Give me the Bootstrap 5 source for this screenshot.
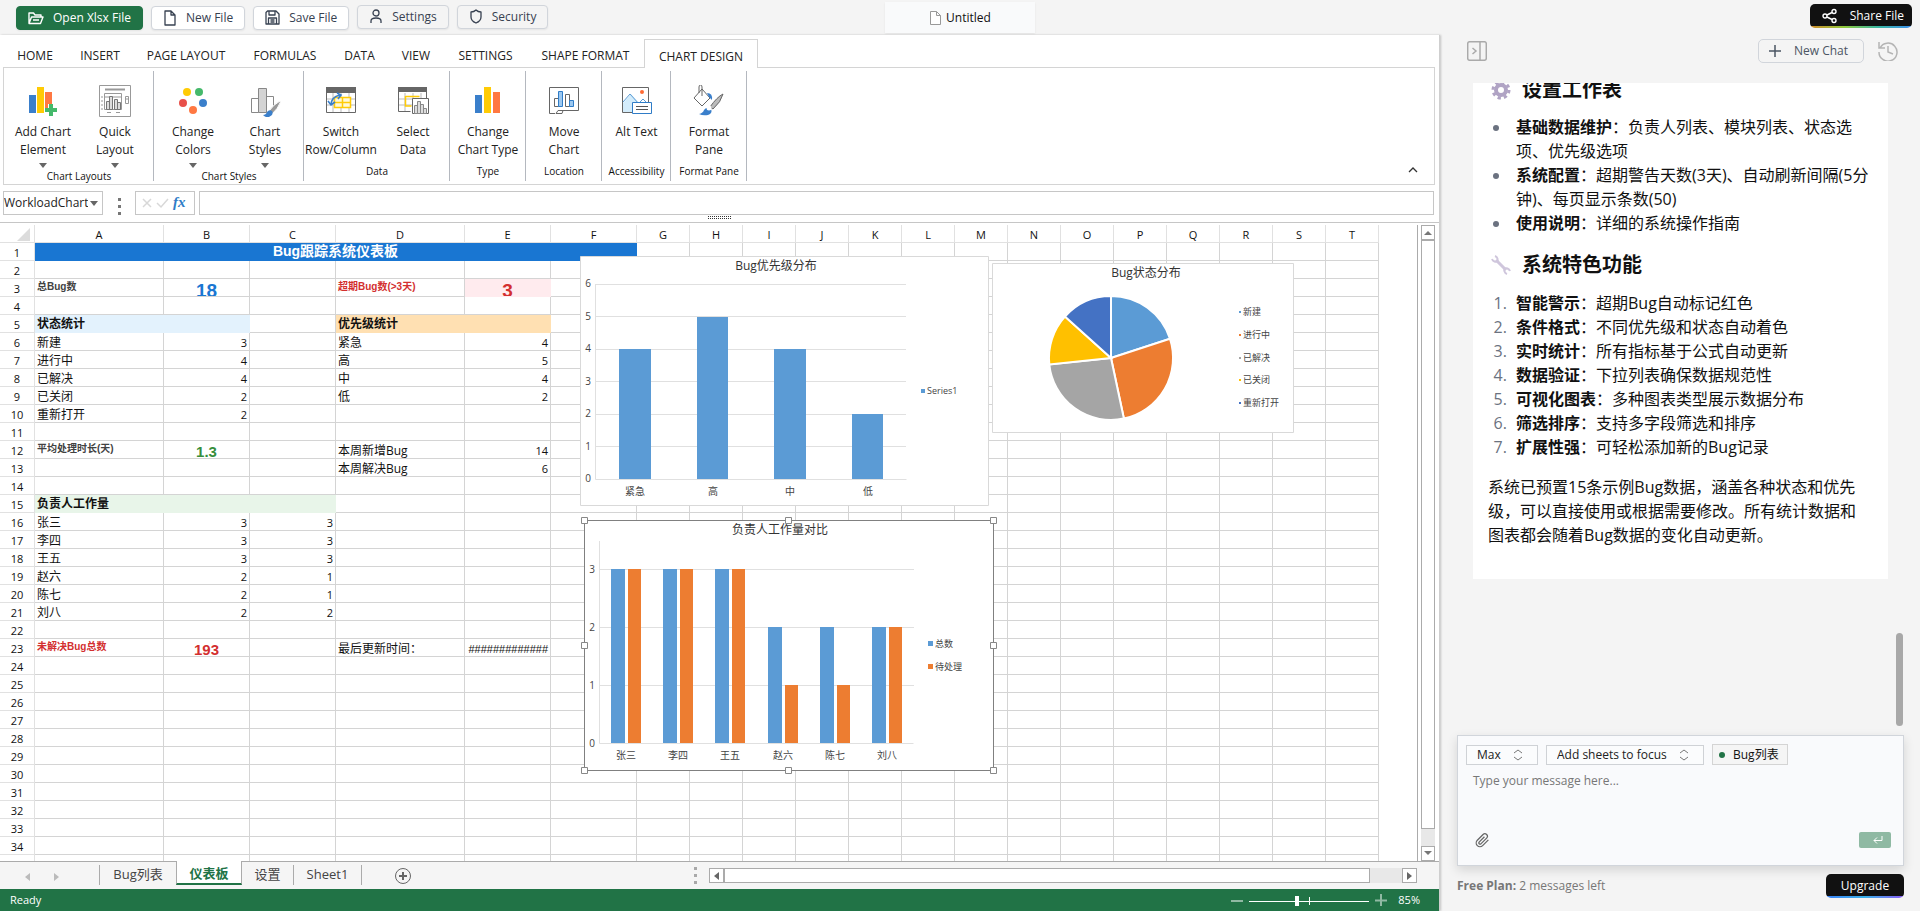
<!DOCTYPE html>
<html lang="zh-CN">
<head>
<meta charset="utf-8">
<meta name="viewport" content="width=device-width, initial-scale=1">
<title>Untitled</title>
<link href="https://cdn.jsdelivr.net/npm/bootstrap@5.3.0/dist/css/bootstrap.min.css" rel="stylesheet">
<style>
:root{--green:#217346;--line:#d4d4d4;--pane:#f4f4f4}
body{font-family:"Open Sans","Noto Sans CJK SC",sans-serif;font-size:12px;line-height:18px;color:#111;background:var(--pane)}
button,input,select,textarea{font-family:inherit}
svg{display:block;flex:none}
/* top bar */
.topbar{height:35px;display:grid;grid-template-columns:1fr auto 1fr;padding:0 8px}
.tool{height:24px;padding:0 11px;display:inline-flex;align-items:center;gap:9px;font-size:12px;line-height:18px;border:1px solid #d1d5db;border-radius:4px;background:#fff;color:#374151;box-shadow:0 1px 2px #0001}
.tool.open{background:var(--green);border-color:var(--green);color:#fff}
.tool.soft{background:var(--pane);margin-bottom:2px}
.docname{width:150px;height:31px;margin-top:2px;background:#f9fafb;box-shadow:0 1px 2px #0001}
.glow{height:24px;border:0;border-radius:5px;color:#fff;font-size:12px;line-height:18px;background:linear-gradient(#111,#111) top/100% calc(100% - 2px) no-repeat,linear-gradient(90deg,#d08a2a,#8fc83a,#38b6a0,#3b8ff0)}
.glow.cool{background:linear-gradient(#111,#111) top/100% calc(100% - 2px) no-repeat,linear-gradient(90deg,#3b82f6,#38b0e8,#8b5cf6)}
/* workbook */
.book{background:#fff;border-right:1px solid #cfcfcf;box-shadow:1px 0 2px #0003;min-width:0}
.tabs{height:33px;padding-left:3px}
.tabs a{color:#222;text-decoration:none;padding:12px 0 0;text-align:center;height:32px;line-height:18px}
.tabs a.on{margin-top:4px;height:29px;padding-top:8px;border:1px solid var(--line);border-bottom:0;background:#fff;z-index:1}
.ribbon{margin:-1px 4px 0 3px;border:1px solid var(--line);height:118px;padding:3px 0;position:relative}
.grp{border-right:1px solid #b4b8bf;height:110px;padding-left:1px}
.grp small{font-size:10px;line-height:12px;margin-top:6px;white-space:nowrap}
.grp.drop small{margin-top:0}
.rb{border:0;background:none;padding:14px 0 0;width:72px;display:flex;flex-direction:column;align-items:center;font-size:12px;line-height:18px;color:#222}
.rb span{margin-top:6px;min-height:36px;white-space:nowrap}
.rb i{height:11px;padding-top:4px}
.rb i::before,.caret::before{content:"";display:block;border:4px solid transparent;border-top:5px solid #666;border-bottom:0}
.fbar{padding:6px 5px 0 3px;height:38px;border-bottom:1px solid #c6c6c6;position:relative}
.box{height:24px;border:1px solid #c6c6c6;background:#fff;font-size:12px}
.box input{border:0;padding:0;outline:0;width:84px;color:#222}
.grip{position:absolute;bottom:2px;left:50%;margin-left:-12px;width:24px;height:4px;background:repeating-linear-gradient(90deg,#333 0 1px,transparent 1px 2px) 0 0/100% 1px no-repeat,repeating-linear-gradient(90deg,#333 0 1px,transparent 1px 2px) 0 2px/100% 1px no-repeat}
.dots span{width:3px;height:3px;background:#777;display:block}
/* grid */
.sheet{position:relative;overflow:hidden;border-right:1px solid #ababab;margin-top:2px}
.grid{table-layout:fixed;border-collapse:separate;border-spacing:0;width:1379px;font-size:12px}
.grid th,.grid td{padding:0;height:18px;border-right:1px solid var(--line);border-bottom:1px solid var(--line)}
.grid th{font-weight:400;font-size:11px;text-align:center;border-color:#e1e1e1;line-height:15px;padding-top:2px}
.grid div{height:17px;line-height:19px;overflow:hidden;padding:0 2px;white-space:nowrap}
.grid .n{text-align:right;font-size:11px;line-height:20px}
.grid .hash{font-family:"Liberation Sans",sans-serif}
.grid .b{font-weight:700;line-height:18px}
.grid .s{font:700 10px/16px "Liberation Sans","Noto Sans CJK SC",sans-serif;color:#424242}
.grid .big{font:700 19px/24px "Liberation Sans",sans-serif;text-align:center;color:#1976d2}
.grid .mid{font:700 15px/21px "Liberation Sans",sans-serif;text-align:center}
.grid .red{color:#d32f2f}.grid .grn{color:#388e3c}
.grid .ttl{font:700 14px/16px "Liberation Sans","Noto Sans CJK SC",sans-serif;text-align:center;color:#fff}
.grid td.blue{background:#1976d2;border-color:#1976d2}
.grid td.pink{background:#ffebee;border-color:#ffebee}
.grid td.sky{background:#e3f2fd;border-color:#e3f2fd}
.grid td.sand{background:#ffe0b2;border-color:#ffe0b2}
.grid td.mint{background:#e8f5e9;border-color:#e8f5e9}
.chart{position:absolute;font-family:"Open Sans","Noto Sans CJK SC",sans-serif;overflow:visible}
.chart text{fill:#444;font-size:10px}
.chart .t{font-size:12px;text-anchor:middle;fill:#333}
.chart .c{text-anchor:middle}.chart .e{text-anchor:end}.chart .l{font-size:9px}
.c1{left:580px;top:31px}.c2{left:992px;top:38px}.c3{left:584px;top:295px}
.sb{border:1px solid #ababab;background:#fff;width:15px;height:15px;padding:0;display:flex;align-items:center;justify-content:center;flex:none}
.vs{width:14px;margin:2px 4px 0 3px;background:#e8e8e8}
.thumb{background:#fff;border:1px solid #ababab}
.sheets{height:28px;background:#f5f5f5;border-top:1px solid #ababab}
.sheets a{color:#444;text-decoration:none;font-size:13px;line-height:18px;height:20px;margin-top:3px;text-align:center;border-right:1px solid #ababab}
.sheets a.on{height:24px;margin:-1px 0 0;line-height:24px;padding-top:0;background:#fff;color:var(--green);font-weight:700;border:solid #ababab;border-width:0 1px}
.sheets a.on{border-bottom:2px solid var(--green)}
.status{height:22px;background:var(--green);color:#fff;font-size:11px}
.zoomer{appearance:none;width:120px;height:10px;margin:0;background:linear-gradient(#fff,#fff) 60px 1px/1px 8px no-repeat,linear-gradient(#fff,#fff) 0 5px/100% 1px no-repeat}
.zoomer::-webkit-slider-thumb{appearance:none;width:4px;height:10px;background:#fff}
/* chat */
.chat{width:25%;flex:none;padding:0 16px 0 17px}
.chathead{height:48px;padding:4px 6px 0 10px}
.newchat{height:24px;border:1px solid #d1d5db;border-radius:5px;background:var(--pane);color:#4b5563;padding:0 15px 0 10px;font-size:12px;line-height:18px;gap:13px}
.log{min-height:0;overflow:hidden;position:relative}
.msg{margin:0 16px;background:#fff;padding:0 15px 32px;font-size:16px;line-height:24px;color:#111;overflow:hidden}
.msg h3{font-size:20px;line-height:28px;font-weight:700;margin:21px 0 12px;padding-left:3px;gap:11px}
.msg h3.first{margin-top:-7px;margin-bottom:11px}
.msg h3.second{margin:16px 0 12px}
.msg ul,.msg ol{padding-left:23px;margin:0}
.msg li{padding-left:5px}
.msg ul ::marker,.msg ol ::marker{color:#6b7280}
.msg p{margin:16px 0 0;padding-right:8px}
.scroller{position:absolute;right:1px;bottom:9px;width:7px;height:93px;border-radius:4px;background:#a8a8a8}
.compose{background:#f9fafc;border:1px solid #d1d5db;height:131px;padding:8px;box-shadow:0 4px 10px #0002}
.pick{appearance:none;border:1px solid #cfd2d6;height:20px;padding:0 10px;font-size:12px;line-height:18px;background:#fbfcfd url("data:image/svg+xml,%3Csvg xmlns='http://www.w3.org/2000/svg' width='10' height='12' fill='none' stroke='%23777'%3E%3Cpath d='M1 4l4-3 4 3M1 8l4 3 4-3'/%3E%3C/svg%3E") no-repeat right 14px center;color:#222}
.tag{border:1px solid #d4d4d4;background:#f5f5f5;height:21px;padding:0 8px 0 6px;gap:8px}
.compose textarea{border:0;background:none;resize:none;outline:0;height:67px;padding:7px 7px;font-size:12px;line-height:18px}
.compose textarea::placeholder{color:#777;opacity:1}
.send{width:32px;height:16px;border:0;border-radius:2px;background:#8fb9a3;padding:0 0 0 14px}
.plan{height:45px;padding-top:8px;color:#777}
</style>
</head>
<body class="vh-100 d-flex flex-column overflow-hidden">
<header class="topbar flex-shrink-0">
  <div class="d-flex align-items-center gap-2 ps-2">
    <button class="tool open"><svg width="16" height="14" viewBox="0 0 16 14" fill="none" stroke="#fff" stroke-width="1.4" stroke-linejoin="round"><path d="M1 12V2h4.500l1.500 2h6v2M1 12.500L3.500 6h11.500l-2.500 6.500zM5 9h6"/></svg>Open Xlsx File</button>
    <button class="tool"><svg width="14" height="16" viewBox="0 0 14 16" fill="none" stroke="#374151" stroke-width="1.3" stroke-linejoin="round"><path d="M2 1h6l4 4v10H2zM8 1v4h4"/></svg>New File</button>
    <button class="tool"><svg width="15" height="15" viewBox="0 0 15 15" fill="none" stroke="#374151" stroke-width="1.3" stroke-linejoin="round"><path d="M1 2.500L2.500 1H11l3 3v10H1zM4 1v4h6V1M3.500 14V8h8v6M5.500 10h4M5.500 12h4"/></svg>Save File</button>
    <button class="tool soft"><svg width="14" height="15" viewBox="0 0 14 15" fill="none" stroke="#374151" stroke-width="1.3"><circle cx="7" cy="4" r="3"/><path d="M2 14V12q0-3 5-3t5 3v2"/></svg>Settings</button>
    <button class="tool soft"><svg width="14" height="15" viewBox="0 0 14 15" fill="none" stroke="#374151" stroke-width="1.3" stroke-linejoin="round"><path d="M7 1q2 2 5 2v5q0 4-5 6-5-2-5-6V3q3 0 5-2z"/></svg>Security</button>
  </div>
  <div class="docname d-flex align-items-center justify-content-center gap-1"><svg width="13" height="14" viewBox="0 0 13 14" fill="#fff" stroke="#999"><path d="M1.500.5h6l4 4v9h-10zM7.500.5v4h4"/></svg>Untitled</div>
  <div class="d-flex justify-content-end pt-1"><button class="glow d-flex align-items-center gap-2 px-2"><svg class="ms-1 me-1" width="16" height="16" viewBox="0 0 16 16" fill="none" stroke="#fff" stroke-width="1.4"><circle cx="3" cy="8" r="2"/><circle cx="12" cy="3.500" r="2"/><circle cx="12" cy="12.500" r="2"/><path d="M5 7l5-2.500M5 9l5 2.500"/></svg>Share File</button></div>
</header>
<div class="d-flex flex-grow-1" style="min-height:0">
<main class="book d-flex flex-column flex-grow-1">
  <nav class="tabs d-flex flex-shrink-0">
    <a href="#" style="width:64px">HOME</a><a href="#" style="width:66px">INSERT</a><a href="#" style="width:106px">PAGE LAYOUT</a><a href="#" style="width:92px">FORMULAS</a><a href="#" style="width:57px">DATA</a><a href="#" style="width:56px">VIEW</a><a href="#" style="width:83px">SETTINGS</a><a href="#" style="width:117px">SHAPE FORMAT</a><a href="#" class="on" style="width:114px">CHART DESIGN</a>
  </nav>
  <section class="ribbon d-flex flex-shrink-0">
    <div class="grp drop d-flex flex-column align-items-center" style="width:150px"><div class="d-flex">
      <button class="rb"><svg width="32" height="32" viewBox="0 0 32 32"><path fill="#3a7fcb" d="M2 10h7v18H2z"/><path fill="#ffcb05" d="M10 2h7v26h-7z"/><path fill="#ff7842" d="M18 7h7v12h-4v5h-3z"/><path fill="#45b96b" d="M22 19h4v4h4v4h-4v4h-4v-4h-4v-4h4z"/></svg><span>Add Chart<br>Element</span><i></i></button>
      <button class="rb"><svg width="32" height="32" viewBox="0 0 32 32" fill="none" stroke="#999"><path d="M.5.5h31v31H.5z"/><path d="M6 4.500h20" stroke-width="2"/><path d="M5.500 8.500h17v16h-17zM2 12h2M2 16h2M2 20h2M2 24h2M6 12h16M26.500 11.500h3v7h-3zM27 14h2M8 27.500h4M17 27.500h4"/><path fill="#ddd" stroke="#777" d="M7.500 16.500h3v8h-3zM10.500 11.500h3v13h-3zM15.500 14.500h3v10h-3zM18.500 17.500h3v7h-3z"/></svg><span>Quick<br>Layout</span><i></i></button></div>
      <small>Chart Layouts</small></div>
    <div class="grp drop d-flex flex-column align-items-center" style="width:150px"><div class="d-flex">
      <button class="rb"><svg width="32" height="32" viewBox="0 0 32 32"><circle cx="10" cy="7" r="4" fill="#ffcb05"/><circle cx="22" cy="7" r="4" fill="#45b96b"/><circle cx="6" cy="18" r="4" fill="#e8504a"/><circle cx="26" cy="18" r="4" fill="#3a7fcb"/><circle cx="16" cy="25" r="4" fill="#ff7842"/></svg><span>Change<br>Colors</span><i></i></button>
      <button class="rb"><svg width="32" height="32" viewBox="0 0 32 32"><g fill="#fff" stroke="#888"><path d="M2.500 13.500h7v14h-7zM17.500 11.500h7v16h-7z"/><path fill="#d4d4d4" d="M9.500 3.500h8v24h-8z"/></g><path d="M31 16q-6 3-11 10l3 3q6-5 9-13z" fill="#999" stroke="#fff"/><path d="M14 30q3 0 4-3 2-3 5-1 2 4-3 6-3 1-6-2z" fill="#3a7fcb"/></svg><span>Chart<br>Styles</span><i></i></button></div>
      <small>Chart Styles</small></div>
    <div class="grp d-flex flex-column align-items-center" style="width:146px"><div class="d-flex">
      <button class="rb"><svg width="32" height="32" viewBox="0 0 32 32" fill="none"><path stroke="#bbb" d="M8 8v19M16 8v19M24 8v19M2 14h28M2 20h28"/><path stroke="#666" d="M1.500 3v24.500h29V3"/><path fill="#666" d="M1 2h30v6H1z"/><path d="M9.500 12.500h16v10h-16zM9 17.500h16M17.500 12v10" stroke="#ffcb05" fill="#fff8d8" stroke-width="1.500"/><path d="M6 20Q6 12 15 10M12 8l4 2-3 4M3 16l3 4 4-3" stroke="#3a7fcb" stroke-width="1.600"/></svg><span>Switch<br>Row/Column</span></button>
      <button class="rb"><svg width="32" height="32" viewBox="0 0 32 32" fill="none"><path stroke="#bbb" d="M8 8v19M16 8v19M24 8v19M2 14h28M2 20h28"/><path stroke="#666" d="M1.500 3v23.500h12M29.500 3v10"/><path fill="#666" d="M1 2h29v5H1z"/><path d="M8.500 11.500h14M8.500 11v10h6" stroke="#ffcb05" stroke-width="1.500"/><path fill="#fff" stroke="#666" d="M15.500 13.500h16v15h-16z"/><path fill="#ddd" stroke="#888" d="M17.500 20.500h3v8h-3zM20.500 16.500h3v12h-3zM23.500 19.500h3v9h-3zM26.500 23.500h3v5h-3z"/></svg><span>Select<br>Data</span></button></div>
      <small>Data</small></div>
    <div class="grp d-flex flex-column align-items-center" style="width:76px">
      <button class="rb"><svg width="32" height="32" viewBox="0 0 32 32"><path fill="#3a7fcb" d="M3 10h7v18H3z"/><path fill="#ffcb05" d="M12 2h7v26h-7z"/><path fill="#ff7842" d="M21 7h7v21h-7z"/></svg><span>Change<br>Chart Type</span></button><small>Type</small></div>
    <div class="grp d-flex flex-column align-items-center" style="width:76px">
      <button class="rb"><svg width="32" height="32" viewBox="0 0 32 32" fill="#fff" stroke="#666"><path d="M7 28.500H1.500v-26h29v23H14"/><path d="M8 28.500l2-3h5l-1 3z"/><path d="M6.500 13.500h4v8h-4zM17.500 9.500h4v12h-4z"/><path fill="#9cc8f0" stroke="#2f7cc7" d="M10.500 6.500h4v15h-4zM21.500 15.500h4v6h-4z"/></svg><span>Move<br>Chart</span></button><small>Location</small></div>
    <div class="grp d-flex flex-column align-items-center" style="width:69px">
      <button class="rb" style="width:67px"><svg width="32" height="32" viewBox="0 0 32 32" fill="#fff"><path stroke="#666" d="M1.500 2.500h26v25h-26z"/><path d="M2 18l8-9 10 11v7H2z" fill="#d3ecfb"/><path d="M2 17l7-8 9 10M18 18l4-4 4 4" fill="none" stroke="#5a9bd4"/><circle cx="21" cy="7" r="2" fill="#ff6b35"/><path stroke="#2f7cc7" d="M11.500 17.500h19v11h-19z"/><path stroke="#555" d="M15 21.500h12M15 24.500h12"/></svg><span>Alt Text</span></button><small>Accessibility</small></div>
    <div class="grp d-flex flex-column align-items-center" style="width:76px">
      <button class="rb"><svg width="32" height="32" viewBox="0 0 32 32" fill="none" stroke="#666"><path d="M9 4l8 9-8 8-8-8zM9 11V2q0-2-1.500-2T6 2v6"/><path fill="#3a7fcb" stroke="none" d="M14 8q6 0 5 7l-3-3z"/><path fill="#bbb" d="M30 9q-6 3-13 13l3 2q8-7 10-15z"/><path fill="#3a7fcb" stroke="none" d="M6 29q4-1 5-4 3-4 7-1 2 4-3 6-5 1-9-1z"/><circle cx="16" cy="23" r="2.500" fill="#fff" stroke="none"/></svg><span>Format<br>Pane</span></button><small>Format Pane</small></div>
    <button class="btn btn-sm p-0 border-0 ms-auto mt-auto me-3 mb-2" aria-label="Collapse"><svg width="10" height="7" viewBox="0 0 10 7" fill="none" stroke="#333" stroke-width="1.300"><path d="M1 6l4-4 4 4"/></svg></button>
  </section>
  <section class="fbar d-flex flex-shrink-0">
    <div class="box d-flex align-items-center justify-content-between" style="width:100px"><input value="WorkloadChart" aria-label="Name box"><b class="caret me-1"></b></div>
    <div class="dots d-flex flex-column justify-content-center gap-1" style="margin:0 14px 0 15px"><span></span><span></span><span></span></div>
    <div class="box d-flex align-items-center justify-content-center" style="width:60px"><svg width="56" height="20" viewBox="0 0 56 20"><path d="M6 6l8 8M14 6l-8 8M20 10l4 4 7-8" stroke="#d8d8d8" stroke-width="1.500" fill="none"/><text x="36" y="14" font-family="Liberation Serif" font-style="italic" font-weight="700" font-size="15" fill="#2f7cc7">fx</text></svg></div>
    <input class="box flex-grow-1 ms-1" aria-label="Formula">
    <div class="grip"></div>
  </section>
  <div class="d-flex flex-grow-1" style="min-height:0">
    <div class="sheet flex-grow-1">
      <table class="grid" id="grid"></table>
      <svg class="chart c1" width="409" height="250"><path d="M.5.5h408v249H.500z" fill="#fff" stroke="#d9d9d9"/>
        <path d="M15 28.500h311M15 60.500h311M15 93.500h311M15 125.500h311M15 158.500h311M15 190.500h311M15.500 28v195.500h311" fill="none" stroke="#e0e0e0"/>
        <path fill="#5b9bd5" d="M39 93h32v130H39zM117 61h31v162h-31zM194 93h32v130h-32zM272 158h31v65h-31zM341 133h4v4h-4z"/>
        <text class="t" x="196" y="14">Bug优先级分布</text>
        <text class="e" x="11" y="31">6</text><text class="e" x="11" y="64">5</text><text class="e" x="11" y="96">4</text><text class="e" x="11" y="129">3</text><text class="e" x="11" y="161">2</text><text class="e" x="11" y="194">1</text><text class="e" x="11" y="226">0</text>
        <text class="c" x="55" y="239">紧急</text><text class="c" x="133" y="239">高</text><text class="c" x="210" y="239">中</text><text class="c" x="288" y="239">低</text><text class="l" x="347" y="138">Series1</text></svg>
      <svg class="chart c2" width="302" height="170"><path d="M.5.5h301v169H.500z" fill="#fff" stroke="#d9d9d9"/>
        <g stroke="#fff" stroke-width="2"><path fill="#5b9bd5" d="M119 95V33A62 62 0 0 1 178 75.800z"/><path fill="#ed7d31" d="M119 95L178 75.800A62 62 0 0 1 131.900 155.600z"/><path fill="#a5a5a5" d="M119 95L131.900 155.600A62 62 0 0 1 57.300 101.500z"/><path fill="#ffc000" d="M119 95L57.300 101.500A62 62 0 0 1 72.900 53.500z"/><path fill="#4472c4" d="M119 95L72.900 53.500A62 62 0 0 1 119 33z"/></g>
        <path fill="#5b9bd5" d="M247 48h2v2h-2z"/><path fill="#ed7d31" d="M247 71h2v2h-2z"/><path fill="#a5a5a5" d="M247 94h2v2h-2z"/><path fill="#ffc000" d="M247 116h2v2h-2z"/><path fill="#4472c4" d="M247 139h2v2h-2z"/>
        <text class="t" x="154" y="14">Bug状态分布</text><text class="l" x="251" y="52">新建</text><text class="l" x="251" y="75">进行中</text><text class="l" x="251" y="98">已解决</text><text class="l" x="251" y="120">已关闭</text><text class="l" x="251" y="143">重新打开</text></svg>
      <svg class="chart c3" width="410" height="251"><path d="M.5.5h409v250H.500z" fill="#fff" stroke="#808080"/>
        <path d="M16 49.500h314M16 107.500h314M16 165.500h314M15.500 21v202.500h314" fill="none" stroke="#e0e0e0"/>
        <g id="bars"></g>
        <path fill="#5b9bd5" d="M344 121h5v5h-5z"/><path fill="#ed7d31" d="M344 144h5v5h-5z"/>
        <text class="t" x="196" y="14">负责人工作量对比</text>
        <text class="e" x="11" y="53">3</text><text class="e" x="11" y="111">2</text><text class="e" x="11" y="169">1</text><text class="e" x="11" y="227">0</text>
        <text class="l" x="351" y="127">总数</text><text class="l" x="351" y="150">待处理</text>
        <path fill="#fff" stroke="#888" d="M-2.500-2.500h6v6h-6zM201.500-2.500h6v6h-6zM406.500-2.500h6v6h-6zM-2.500 122.500h6v6h-6zM406.500 122.500h6v6h-6zM-2.500 247.500h6v6h-6zM201.500 247.500h6v6h-6zM406.500 247.500h6v6h-6z"/></svg>
    </div>
    <div class="vs d-flex flex-column"><button class="sb w-100" aria-label="Up"><svg width="8" height="5"><path d="M0 5l4-4 4 4z" fill="#777"/></svg></button><div class="thumb flex-grow-1" style="margin-bottom:17px"></div><button class="sb w-100" aria-label="Down"><svg width="8" height="5"><path d="M0 0l4 4 4-4z" fill="#777"/></svg></button></div>
  </div>
  <nav class="sheets d-flex flex-shrink-0">
    <div class="d-flex align-items-center border-end" style="width:100px;height:20px;margin-top:3px;padding:4px 0 0 25px;gap:24px;border-color:#ababab!important"><svg width="5" height="8"><path d="M5 0v8L0 4z" fill="#bbb"/></svg><svg width="5" height="8"><path d="M0 0v8l5-4z" fill="#bbb"/></svg></div>
    <a href="#" style="width:76px;border:0">Bug列表</a><a href="#" class="on" style="width:66px">仪表板</a><a href="#" style="width:52px">设置</a><a href="#" style="width:68px">Sheet1</a>
    <button class="btn p-0 border-0 ms-4" style="padding-left:9px!important" aria-label="Add sheet"><svg width="16" height="16" fill="none" stroke="#666"><circle cx="8" cy="8" r="7.500"/><path d="M4 8h8M8 4v8" stroke-width="2"/></svg></button>
    <div class="dots d-flex flex-column justify-content-center gap-1 ms-auto" style="margin-right:12px;opacity:.6"><span></span><span></span><span></span></div>
    <div class="d-flex align-items-center" style="width:708px;margin-right:22px"><button class="sb" aria-label="Left"><svg width="5" height="8"><path d="M5 0v8L0 4z" fill="#666"/></svg></button><div class="thumb flex-grow-1" style="height:15px"></div><div style="width:32px;height:15px;background:#e8e8e8"></div><button class="sb" aria-label="Right"><svg width="5" height="8"><path d="M0 0v8l5-4z" fill="#666"/></svg></button></div>
  </nav>
  <footer class="status d-flex align-items-center flex-shrink-0" style="padding:0 19px 0 10px">Ready
    <svg class="ms-auto" width="12" height="12"><path d="M0 7h12" stroke="#90b9a3" stroke-width="2"/></svg><input class="zoomer" type="range" min="10" max="210" value="88" aria-label="Zoom" style="margin:2px 6px 0"><svg width="12" height="12"><path d="M0 6.500h12M6 0v12" stroke="#90b9a3" stroke-width="2"/></svg><span style="margin-left:11px">85%</span></footer>
</main>
<aside class="chat d-flex flex-column">
  <div class="chathead d-flex">
    <button class="btn p-0 border-0 align-self-start me-auto" aria-label="Hide panel" style="margin-top:2px"><svg width="20" height="20" fill="none" stroke="#aaa" stroke-width="1.500"><rect x=".7" y=".7" width="18.600" height="18.600" rx="2"/><path d="M13 1v18M5.500 7l3.500 3-3.500 3"/></svg></button>
    <button class="newchat d-flex align-items-center"><svg width="12" height="12" stroke="#4b5563" stroke-width="1.500"><path d="M0 6h12M6 0v12"/></svg>New Chat</button>
    <button class="btn p-0 border-0 align-self-start" aria-label="History" style="margin:2px 0 0 14px"><svg width="20" height="20" fill="none" stroke="#b4b4b4" stroke-width="1.500"><path d="M2 7a9 9 0 1 1-1 4M1 1v6h6M10 5v6l5 2"/></svg></button>
  </div>
  <div class="log flex-grow-1">
    <div class="msg">
      <h3 class="first d-flex align-items-center"><svg width="20" height="20" viewBox="0 0 20 20" fill="none" stroke="#b0a3c4"><circle cx="10" cy="10" r="5" stroke-width="4"/><circle cx="10" cy="10" r="8" stroke-width="3" stroke-dasharray="3.300 3"/></svg>设置工作表</h3>
      <ul><li><b>基础数据维护</b>：负责人列表、模块列表、状态选项、优先级选项</li><li><b>系统配置</b>：超期警告天数(3天)、自动刷新间隔(5分钟)、每页显示条数(50)</li><li><b>使用说明</b>：详细的系统操作指南</li></ul>
      <h3 class="second d-flex align-items-center"><svg width="20" height="20" viewBox="0 0 20 20" fill="none" stroke="#cfc6dc" stroke-width="3"><path d="M5 5l10 10"/><path d="M1 4a4 4 0 0 0 6 2M4 1a4 4 0 0 1 2 6M19 16a4 4 0 0 0-6-2M16 19a4 4 0 0 1-2-6" stroke-width="2"/></svg>系统特色功能</h3>
      <ol><li><b>智能警示</b>：超期Bug自动标记红色</li><li><b>条件格式</b>：不同优先级和状态自动着色</li><li><b>实时统计</b>：所有指标基于公式自动更新</li><li><b>数据验证</b>：下拉列表确保数据规范性</li><li><b>可视化图表</b>：多种图表类型展示数据分布</li><li><b>筛选排序</b>：支持多字段筛选和排序</li><li><b>扩展性强</b>：可轻松添加新的Bug记录</li></ol>
      <p>系统已预置15条示例Bug数据，涵盖各种状态和优先级，可以直接使用或根据需要修改。所有统计数据和图表都会随着Bug数据的变化自动更新。</p>
    </div>
    <div class="scroller"></div>
  </div>
  <form class="compose d-flex flex-column flex-shrink-0">
    <div class="d-flex align-items-end gap-2"><select class="pick" style="width:72px" aria-label="Model"><option>Max</option></select><select class="pick" style="width:158px" aria-label="Sheets"><option>Add sheets to focus</option></select><span class="tag d-flex align-items-center"><svg width="6" height="6"><circle cx="3" cy="3" r="3" fill="#217346"/></svg>Bug列表</span></div>
    <textarea placeholder="Type your message here..." aria-label="Message"></textarea>
    <div class="d-flex align-items-center justify-content-between" style="padding:0 4px 0 9px"><button type="button" class="btn p-0 border-0" aria-label="Attach"><svg width="15" height="15" viewBox="0 0 24 24" fill="none" stroke="#666" stroke-width="2"><path d="M21.400 11l-9.200 9.200a6 6 0 0 1-8.500-8.500l9.200-9.200a4 4 0 0 1 5.700 5.700l-9.200 9.200a2 2 0 0 1-2.800-2.800l8.500-8.500"/></svg></button><button type="button" class="send" aria-label="Send"><svg width="10" height="8" fill="none" stroke="#fff"><path d="M9 0v4.500H1M4 1.500L1 4.500l3 3"/></svg></button></div>
  </form>
  <div class="plan d-flex flex-shrink-0 align-items-start"><span style="padding-top:3px"><b>Free Plan:</b> 2 messages left</span><button class="glow cool ms-auto px-3" style="width:78px;padding:0!important">Upgrade</button></div>
</aside>
</div>
<script src="https://cdn.jsdelivr.net/npm/bootstrap@5.3.0/dist/js/bootstrap.bundle.min.js"></script>
<script>
const cols='ABCDEFGHIJKLMNOPQRST'.split('');
const widths=[129,86,86,129,86,86];
// address: [text, text classes, fill]
const cells={A3:['总Bug数','s'],B3:['18','big'],D3:['超期Bug数(>3天)','s red'],E3:['3','big red','pink'],
A5:['状态统计','b','sky'],B5:['','','sky'],D5:['优先级统计','b','sand'],E5:['','','sand'],
A12:['平均处理时长(天)','s'],B12:['1.3','mid grn'],D12:['本周新增Bug',''],E12:['14','n'],D13:['本周解决Bug',''],E13:['6','n'],
A15:['负责人工作量','b','mint'],B15:['','','mint'],C15:['','','mint'],
A23:['未解决Bug总数','s red'],B23:['193','mid red'],D23:['最后更新时间：',''],E23:['#############','n hash']};
[['新建',3],['进行中',4],['已解决',4],['已关闭',2],['重新打开',2]].forEach(([t,v],i)=>{cells['A'+(6+i)]=[t,''];cells['B'+(6+i)]=[v,'n']});
[['紧急',4],['高',5],['中',4],['低',2]].forEach(([t,v],i)=>{cells['D'+(6+i)]=[t,''];cells['E'+(6+i)]=[v,'n']});
const people=[['张三',3,3],['李四',3,3],['王五',3,3],['赵六',2,1],['陈七',2,1],['刘八',2,2]];
people.forEach(([t,a,b],i)=>{cells['A'+(16+i)]=[t,''];cells['B'+(16+i)]=[a,'n'];cells['C'+(16+i)]=[b,'n']});
let h='<colgroup><col style="width:35px">'+cols.map((c,i)=>`<col style="width:${widths[i]||53}px">`).join('')+'</colgroup><thead><tr><th><svg class="ms-auto me-1" width="13" height="13"><path d="M13 0v13H0z" fill="#dcdcdc"/></svg></th>'+cols.map(c=>`<th>${c}</th>`).join('')+'</tr></thead><tbody>';
for(let r=1;r<=35;r++){h+=`<tr><th>${r<35?r:''}</th>`;
  cols.forEach((c,i)=>{if(r===1&&i<6){if(i===0)h+='<td class="blue" colspan="6"><div class="ttl">Bug跟踪系统仪表板</div></td>';return}
    const d=cells[c+r];h+=d?`<td class="${d[2]||''}"><div class="${d[1]}">${d[0]}</div></td>`:'<td></td>'});
  h+='</tr>'}
document.getElementById('grid').innerHTML=h+'</tbody>';
document.getElementById('bars').innerHTML=people.map(([t,a,b],i)=>{const x=27+Math.round(i*52.2);
  return `<rect x="${x}" y="${223-58*a}" width="14" height="${58*a}" fill="#5b9bd5"/><rect x="${x+17}" y="${223-58*b}" width="13" height="${58*b}" fill="#ed7d31"/><text class="c" x="${x+15}" y="239">${t}</text>`}).join('');
</script>
</body>
</html>
